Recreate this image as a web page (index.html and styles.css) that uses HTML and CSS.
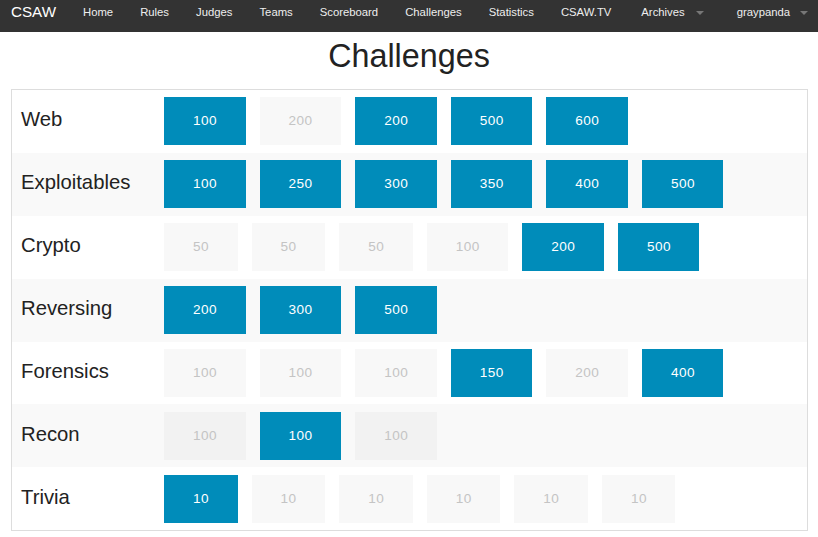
FILE: index.html
```html
<!DOCTYPE html>
<html>
<head>
<meta charset="utf-8">
<title>Challenges</title>
<link rel="stylesheet" href="styles.css">
</head>
<body>
<nav class="topbar">
  <a class="brand">CSAW</a>
  <ul class="menu">
    <li><a>Home</a></li>
    <li><a>Rules</a></li>
    <li><a>Judges</a></li>
    <li><a>Teams</a></li>
    <li><a>Scoreboard</a></li>
    <li><a>Challenges</a></li>
    <li><a>Statistics</a></li>
    <li><a>CSAW.TV</a></li>
    <li class="dropdown arch"><a>Archives</a><span class="caret"></span></li>
    <li class="dropdown user"><a>graypanda</a><span class="caret"></span></li>
  </ul>
</nav>
<h1 class="title">Challenges</h1>
<div class="board">
  <div class="row">
    <div class="cat">Web</div>
    <div class="btns"><span class="btn">100</span><span class="btn done">200</span><span class="btn">200</span><span class="btn">500</span><span class="btn">600</span></div>
  </div>
  <div class="row">
    <div class="cat">Exploitables</div>
    <div class="btns"><span class="btn">100</span><span class="btn">250</span><span class="btn">300</span><span class="btn">350</span><span class="btn">400</span><span class="btn">500</span></div>
  </div>
  <div class="row">
    <div class="cat">Crypto</div>
    <div class="btns"><span class="btn done">50</span><span class="btn done">50</span><span class="btn done">50</span><span class="btn done">100</span><span class="btn">200</span><span class="btn">500</span></div>
  </div>
  <div class="row">
    <div class="cat">Reversing</div>
    <div class="btns"><span class="btn">200</span><span class="btn">300</span><span class="btn">500</span></div>
  </div>
  <div class="row">
    <div class="cat">Forensics</div>
    <div class="btns"><span class="btn done">100</span><span class="btn done">100</span><span class="btn done">100</span><span class="btn">150</span><span class="btn done">200</span><span class="btn">400</span></div>
  </div>
  <div class="row">
    <div class="cat">Recon</div>
    <div class="btns"><span class="btn done">100</span><span class="btn">100</span><span class="btn done">100</span></div>
  </div>
  <div class="row">
    <div class="cat">Trivia</div>
    <div class="btns"><span class="btn">10</span><span class="btn done">10</span><span class="btn done">10</span><span class="btn done">10</span><span class="btn done">10</span><span class="btn done">10</span></div>
  </div>
</div>
</body>
</html>
```
FILE: styles.css
```css
* { box-sizing: border-box; }
html, body { margin: 0; padding: 0; background: #fff; }
body { font-family: "Liberation Sans", Arial, sans-serif; color: #222; }

.topbar {
  height: 32px;
  background: #333;
  display: flex;
  align-items: flex-start;
  padding-left: 11px;
}
.brand {
  font-size: 15.2px;
  line-height: 24px;
  color: #fff;
  margin-right: 13.5px;
}
.menu {
  list-style: none;
  margin: 0;
  padding: 0;
  display: flex;
}
.menu li {
  display: flex;
  align-items: flex-start;
  padding: 0 13.5px;
}
.menu a {
  font-size: 11.3px;
  line-height: 24.5px;
  color: #eee;
}
.menu .caret {
  width: 0;
  height: 0;
  border-top: 4px solid #777;
  border-left: 4px solid transparent;
  border-right: 4px solid transparent;
  margin-top: 11px;
}
.menu .arch { margin-left: 3px; }
.menu .arch .caret { margin-left: 11px; }
.menu .user { padding-left: 19.5px; padding-right: 0; }
.menu .user .caret { margin-left: 10px; }

.title {
  margin: 0;
  padding: 3.5px 0 13.5px;
  font-size: 32.3px;
  line-height: 40px;
  font-weight: normal;
  text-align: center;
  color: #222;
}

.board {
  margin: 0 10px 0 11px;
  border: 1px solid #ddd;
}
.row {
  display: flex;
  align-items: flex-start;
  padding: 7.45px 0;
}
.row:nth-child(even) { background: #f9f9f9; }
.cat {
  width: 152px;
  padding-left: 9px;
  font-size: 20.3px;
  line-height: 45px;
  color: #222;
}
.btns {
  display: flex;
  gap: 14.1px;
}
.btn {
  display: block;
  height: 48px;
  line-height: 48px;
  padding: 0 28.53px 0 28.97px;
  font-size: 13.6px;
  letter-spacing: 0.44px;
  background: #008cba;
  color: #fff;
  text-align: center;
}
.btn.done {
  background: rgba(0, 0, 0, 0.026);
  color: #c4c4c4;
}
```
